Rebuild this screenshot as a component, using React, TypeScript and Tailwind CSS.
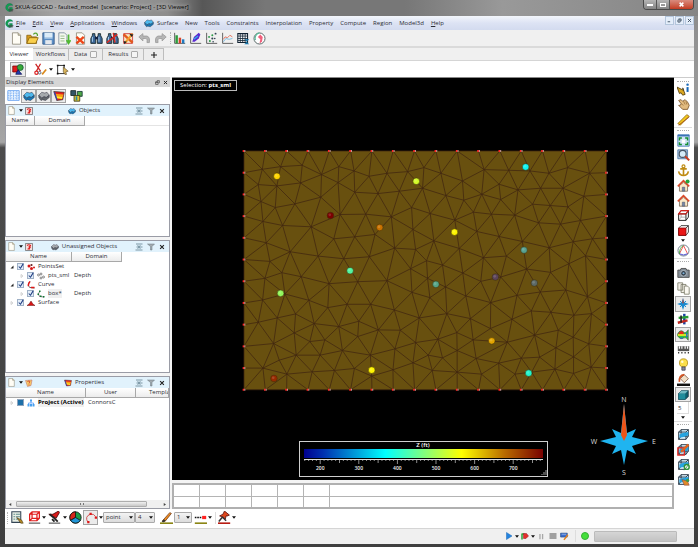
import React, { useState } from "react";
import clsx from "clsx";

type IconProps = { name: string; className?: string };

const cube = (
  <>
    <path d="M2 5l3-3h9v8l-3 4H2z" fill="#d8ecf8" stroke="#123" strokeWidth="1" />
    <path d="M2 5h9v9M11 5l3-3M5 2v8h9M5 10l-3 4" fill="none" stroke="#123" strokeWidth="1" />
    <path d="M3 8l4-2 7-1v4l-6 2-5 1z" fill="#27a4e0" />
  </>
);

const sheet = (
  <path d="M3 1h7l3 3v11H3z" fill="#fffdf5" stroke="#8d8878" strokeWidth="1" />
);

const slab = (top: string, side: string) => (
  <>
    <path d="M1 7l4-4 4 1 3-1 3 4-4 3-3-1-3 2z" fill={top} stroke="#223" strokeWidth=".6" />
    <path d="M1 7l4 4 3-2 3 1 4-3v3l-5 4-4-1-2 1-3-4z" fill={side} stroke="#223" strokeWidth=".6" />
  </>
);

const binoculars = (
  <>
    <path d="M3 2h3v2l1 2v8H1V8l2-4zM10 2h3v2l2 4v6H9V6l1-2z" fill="#3c6797" stroke="#122" />
    <path d="M6 6h4v3H6z" fill="#124" />
    <path d="M3 6v6M11 6v6" stroke="#a9cdea" strokeWidth="1.2" />
  </>
);

const axes = <path d="M2 1v13h13" fill="none" stroke="#444" strokeWidth="1" />;

const house = (
  <>
    <path d="M3 8v7h10V8L8 4z" fill="#fbe9c8" stroke="#765" />
    <path d="M1 9l7-7 7 7" fill="none" stroke="#d94a2a" strokeWidth="2" />
    <path d="M6.500 10h3v5h-3z" fill="#7686a8" stroke="#345" strokeWidth=".5" />
  </>
);

const globe = (
  <>
    <circle cx="8" cy="8" r="6.800" fill="#fff" stroke="#567" strokeWidth="1" />
    <path d="M8 2L3 12M8 2l5 10" stroke="#e33" fill="none" />
    <path d="M3 12q5 3 10 0" stroke="#33c" fill="none" />
    <path d="M8 2q-5 2-5 10" stroke="#3a3" fill="none" />
  </>
);

const icons: Record<string, React.ReactNode> = {
  logo: (
    <>
      <path d="M14 4A7 7 0 1 0 13 13V8H8v2h2q-3 3-5-1 0-5 5-5z" fill="#12a052" stroke="#064" strokeWidth=".6" />
      <path d="M6 12h9M7 14h7" stroke="#444" strokeWidth="1.400" />
    </>
  ),
  page: (
    <>
      {sheet}
      <path d="M10 1v3h3" fill="#ddd4b0" stroke="#8d8878" />
    </>
  ),
  open: (
    <>
      <path d="M1 14V4h5l1 2h6v8z" fill="#d79a1c" stroke="#8a6410" />
      <path d="M1 14l3-7h11l-3 7z" fill="#f9cf4c" stroke="#8a6410" />
      <path d="M9 3q3-3 5 0v2" fill="none" stroke="#58a332" strokeWidth="1.500" />
    </>
  ),
  save: (
    <>
      <path d="M1 1h14v14H1z" fill="#5c8ec4" stroke="#2f5686" />
      <path d="M3 1h10v6H3z" fill="#dcecf8" />
      <path d="M4 10h8v5H4z" fill="#e4e8ee" />
      <path d="M3 8h10" stroke="#a7c8e6" />
    </>
  ),
  exportDoc: (
    <>
      <path d="M1 1h7l3 3v11H1z" fill="#f4f8ee" stroke="#789" />
      <path d="M3 5h5M3 8h5M3 11h5" stroke="#8ab07a" />
      <path d="M13 3v10M10.500 10l2.500 4 2.500-4" fill="none" stroke="#51b832" strokeWidth="2" />
    </>
  ),
  remove: (
    <>
      {sheet}
      <path d="M3 6l9 8M12 6l-9 8" stroke="#ee4518" strokeWidth="3" />
    </>
  ),
  find: binoculars,
  findRed: (
    <>
      {binoculars}
      <path d="M1 13L14 3M9 1l2 12" stroke="#d42a22" strokeWidth="1.800" />
    </>
  ),
  cut: (
    <>
      <path d="M2 2h11v12H2z" fill="#f8e4c4" stroke="#c33" />
      <path d="M2 3l11 10" stroke="#e2581c" strokeWidth="3" />
      <path d="M13 2L4 13" stroke="#f0a02c" strokeWidth="2.600" />
      <path d="M9 2l5 1-2 3zM2 11l4 1-3 3z" fill="#222" />
    </>
  ),
  undo: <path d="M1 6l5-4v3h5q4 1 3 8h-3q1-5-2-5H6v3z" fill="#b5b5b5" stroke="#9a9a9a" />,
  redo: <path d="M15 6l-5-4v3H5q-4 1-3 8h3q-1-5 2-5h3v3z" fill="#b5b5b5" stroke="#9a9a9a" />,
  bars: (
    <>
      {axes}
      <path d="M3 4h3v10H3z" fill="#2d9c3c" />
      <path d="M7 7h3v7H7z" fill="#d6452b" />
      <path d="M11 9h3v5h-3z" fill="#1f7ac0" />
    </>
  ),
  cloud: (
    <>
      {axes}
      <path d="M4 12l2-6 6-5 2 2-2 5-5 4z" fill="#5a2bd0" />
      <path d="M6 9l5-4" stroke="#2fb6e8" strokeWidth="1.500" />
    </>
  ),
  scatter: (
    <>
      {axes}
      <g fill="#2a9a48">
        <circle cx="5" cy="6" r="1.200" />
        <circle cx="9" cy="4" r="1.200" />
        <circle cx="6" cy="11" r="1.200" />
      </g>
      <g fill="#345">
        <circle cx="9" cy="8" r="1.300" />
        <circle cx="13" cy="2" r="1.200" />
        <circle cx="12" cy="8" r="1" />
        <circle cx="10" cy="12" r="1" />
      </g>
    </>
  ),
  lines: (
    <>
      {axes}
      <path d="M3 9l2-3 3 1 3-3 3 2" fill="none" stroke="#e0604a" />
      <path d="M3 12l3-4 4 1 4-1" fill="none" stroke="#68b5e0" />
    </>
  ),
  sheetGrid: (
    <>
      <path d="M1 2h12v11H1z" fill="#fff" stroke="#123" strokeWidth="1.300" />
      <path d="M1 5h12M1 8h12M1 10.500h12M4 2v11M7 2v11M10 2v11" stroke="#123" />
      <path d="M9 9h6l-3 3 3 3H9l3-3z" fill="#1a76a8" />
    </>
  ),
  rose: (
    <>
      <circle cx="8" cy="8" r="6.800" fill="#fff" stroke="#566" strokeWidth="1.200" />
      <path d="M8 1a7 7 0 0 0-5 9" fill="none" stroke="#5b9" strokeWidth="1.400" />
      <path d="M9 3l3 3-1 6-3 2 1-5-3-3z" fill="#f0607c" />
    </>
  ),
  shapes: (
    <>
      <path d="M1 4h8v8H1z" fill="#e01c1c" stroke="#700" />
      <circle cx="11" cy="6" r="4" fill="#38a838" stroke="#153" />
      <path d="M5 15l3-6 5 6z" fill="#2340b0" stroke="#115" />
    </>
  ),
  scissors: (
    <>
      <path d="M2 1l6 9M8 1L3 10" stroke="#c22" strokeWidth="1.500" />
      <circle cx="3" cy="12" r="2" fill="#fff" stroke="#d22" strokeWidth="1.500" />
      <circle cx="7" cy="12" r="1.600" fill="#fff" stroke="#567" strokeWidth="1.200" />
      <path d="M10 14l5-6" stroke="#d9891c" strokeWidth="2" />
    </>
  ),
  polygon: (
    <>
      <path d="M2 3h8v4M2 3v10h9" fill="none" stroke="#222" strokeWidth="1.100" />
      <path d="M1 2h2v2H1zM9 2h2v2H9zM1 12h2v2H1z" fill="#111" />
      <path d="M9 5l6 5-3 1 1 3-2 0-2-3z" fill="#d9b45a" stroke="#542" strokeWidth=".7" />
    </>
  ),
  grid: (
    <>
      <path d="M1 2h14v12H1z" fill="#eaf4ff" stroke="#5b9bf0" />
      <path d="M1 5h14M1 8h14M1 11h14M4 2v12M8 2v12M12 2v12" stroke="#7fb2f4" strokeDasharray="2 1" />
    </>
  ),
  slabBlue: slab("#4db8ee", "#1578b8"),
  slabGray: slab("#a5a9ad", "#62676c"),
  property: (
    <>
      <path d="M1 2l14 1-2 10-8 1z" fill="#e8231c" stroke="#222" strokeWidth=".8" />
      <path d="M2 5l12 1-1 3-9-1z" fill="#fb9d15" />
      <path d="M4 8l9 1-1 3-7-1z" fill="#fdf024" />
      <path d="M1 3l2 0 3 10-1 1z" fill="#3340b0" />
    </>
  ),
  modules: (
    <>
      <path d="M1 2h6v6H1z" fill="#356" stroke="#122" />
      <path d="M9 3h6v6H9z" fill="#4fa848" stroke="#133" />
      <path d="M5 8h7v7H5z" fill="#e3c52e" stroke="#331" />
      <path d="M8 9v5" stroke="#28a" strokeWidth="2" />
    </>
  ),
  refresh: (
    <>
      <path d="M1 1h14v14H1z" fill="#f4dede" stroke="#555" strokeWidth="1.300" />
      <path d="M4 5q4-3 7 0-1 3-4 3M5 12h5M11 8l-4 4" fill="none" stroke="#d22" strokeWidth="2.400" />
    </>
  ),
  help: (
    <>
      <path d="M1 3l13-1-2 11-7 2z" fill="#f7c96a" stroke="#b66" />
      <path d="M5 6q1-3 4-2 2 2-1 4v1M8 11v2" fill="none" stroke="#c32" strokeWidth="1.500" />
    </>
  ),
  collapse: <path d="M2 2h13M5 5l3 2 3-2M3 8h12M5 11l3-2 3 2M1 14h14" fill="none" stroke="#467" strokeWidth="1.300" />,
  filter: <path d="M1 2h14l-5 5v7H7V7z" fill="#a3abb0" stroke="#66757e" />,
  close: <path d="M3 3l10 10M13 3L3 13" stroke="#222" strokeWidth="3" />,
  restore: (
    <>
      <path d="M6 2h8v8M2 6h8v8H2z" fill="none" stroke="#222" strokeWidth="1.800" />
      <path d="M2 7h8" stroke="#222" strokeWidth="2" />
    </>
  ),
  pointsSet: (
    <g fill="#d81818">
      <circle cx="4" cy="6" r="3" />
      <circle cx="9" cy="4" r="2.200" fill="#622" />
      <circle cx="9" cy="11" r="3" />
      <circle cx="14" cy="9" r="2" />
    </g>
  ),
  points: (
    <g fill="#fff" stroke="#444" strokeWidth="1.200">
      <circle cx="3" cy="6" r="2" />
      <circle cx="8" cy="4" r="2" />
      <circle cx="8" cy="12" r="2" />
      <circle cx="13" cy="10" r="2" />
    </g>
  ),
  curveRed: (
    <>
      <path d="M6 1Q-1 9 6 13l9 1" fill="none" stroke="#222" strokeWidth="1.500" />
      <path d="M6 1Q2 5 3 10M8 13h7" fill="none" stroke="#e01818" strokeWidth="3" />
    </>
  ),
  curve: (
    <>
      <path d="M6 2Q0 8 5 13l9 1" fill="none" stroke="#555" strokeWidth="1.500" />
      <path d="M4 1h3v3H4zM1 7h3v3H1zM6 11h3v3H6zM12 12h3v3h-3z" fill="#173" />
    </>
  ),
  surface: <path d="M0 13q4-1 8-9 4 8 8 9z" fill="#d81414" stroke="#611" />,
  tree: (
    <>
      <path d="M8 4v4M3 12V8h10v4" fill="none" stroke="#38f" strokeWidth="1.300" />
      <path d="M6 1h4v4H6zM1 10h4v5H1zM6 10h4v5H6zM11 10h4v5h-4z" fill="#48a0ee" />
    </>
  ),
  listPen: (
    <>
      <path d="M1 1h11v13H1z" fill="#e9efe6" stroke="#345" strokeWidth="1.300" />
      <path d="M3 4h2M6 4h5M3 7h2M6 7h5M3 10h2M6 10h3" stroke="#477" />
      <path d="M7 8l6 3 2 4-3 0z" fill="#b58a25" stroke="#431" strokeWidth=".7" />
    </>
  ),
  wireRed: (
    <>
      <path d="M2 4l3-3h9v8l-3 3H2zM2 4h9v8M11 4l3-3M5 1v8h9M5 9l-3 3" fill="none" stroke="#e01c1c" strokeWidth="1.500" />
      <path d="M1 14h14v2H1z" fill="#888" />
    </>
  ),
  lamp: (
    <>
      <path d="M1 4l5 0 7-4 1 2-4 7-3-2z" fill="#d91c1c" stroke="#400" />
      <path d="M2 4l6 5 4 4M5 10l3 3" fill="none" stroke="#222" strokeWidth="2.200" />
      <path d="M1 14h14v2H1z" fill="#888" />
    </>
  ),
  pie: (
    <>
      <circle cx="8" cy="8" r="7" fill="#1d9c48" stroke="#111" />
      <path d="M8 8V1a7 7 0 0 0-6 10.500z" fill="#d8261c" stroke="#111" />
      <path d="M8 8l-6 3.500a7 7 0 0 0 12 0z" fill="#2196d8" stroke="#111" />
    </>
  ),
  arc: (
    <>
      <path d="M4 14Q-1 6 7 3q5-1 7 3" fill="none" stroke="#c44" strokeWidth="1.200" />
      <path d="M6 1h3v3H6zM3 12h3v3H3zM13 6h3v3h-3z" fill="#e01818" />
    </>
  ),
  brush: (
    <>
      <path d="M3 12l9-10 2 1-8 10z" fill="#ed8a1c" stroke="#742" />
      <path d="M2 13l3-3 2 2-3 2z" fill="#333" />
      <path d="M0 14h16v2H0z" fill="#8b8515" />
    </>
  ),
  lineStyle: (
    <>
      <path d="M1 8h9" stroke="#111" strokeWidth="2" strokeDasharray="2 1" />
      <path d="M10 6h5v4h-5z" fill="#f22" />
      <path d="M1 14h15v2H1z" fill="#8b8515" />
    </>
  ),
  pin: (
    <>
      <path d="M8 0l6 5-2 1-2 0-1 4-2-2-5-2 4-2z" fill="#de471d" stroke="#511" />
      <path d="M5 8l-4 5M5 7l5 5" stroke="#333" strokeWidth="1.800" />
      <path d="M0 14h15v2H0z" fill="#b81c12" />
    </>
  ),
  pickInfo: (
    <>
      <path d="M0 5l8 4-1-3 3 8-3 1-2-3-2 1z" fill="#dba823" stroke="#4a3508" />
      <path d="M13 5v6" stroke="#1767b8" strokeWidth="2.500" />
      <circle cx="13" cy="2" r="1.500" fill="#1767b8" />
    </>
  ),
  hand: (
    <>
      <path d="M2 3l3-1 2 2 3-2 3 3 2 4-2 5H7L2 9l2 0 1-2z" fill="#e2bb80" stroke="#765028" />
      <path d="M5 7l3 2M8 4l2 4M11 4l1 4" stroke="#8e6433" strokeWidth=".8" />
    </>
  ),
  ruler: (
    <>
      <path d="M1 13L12 2l3 2L4 15z" fill="#f1c61c" stroke="#94690b" />
      <path d="M2 15L15 5" stroke="#a04818" />
    </>
  ),
  fit: (
    <>
      <path d="M1 1h14v14H1z" fill="#cfe2f5" stroke="#3973b5" />
      <path d="M1 1h14v2H1z" fill="#3973b5" />
      <path d="M3 8V5h3M10 5h3v3M3 10v3h3M13 10v3h-3" fill="none" stroke="#139030" strokeWidth="1.800" />
      <path d="M6 7h4v4H6z" fill="#fff" />
    </>
  ),
  zoom: (
    <>
      <path d="M1 1h12v11H1z" fill="#a9bfd8" stroke="#4875a7" />
      <circle cx="7" cy="6" r="4.300" fill="#d5ebf8" stroke="#456" strokeWidth="1.400" />
      <path d="M10 9l5 5" stroke="#c63c22" strokeWidth="2.600" />
    </>
  ),
  anchor: (
    <>
      <path d="M8 4v10M4 6h8M2 9q1 5 6 5t6-5" fill="none" stroke="#bf8b13" strokeWidth="2" />
      <circle cx="8" cy="3" r="1.800" fill="none" stroke="#bf8b13" strokeWidth="1.500" />
    </>
  ),
  homeGreen: (
    <>
      {house}
      <circle cx="13" cy="3" r="2.500" fill="#24a33c" />
    </>
  ),
  home: house,
  boxTop: (
    <>
      <path d="M2 6l3-4h9v8l-3 4H2zM2 6h9v8M11 6l3-4" fill="#fff" stroke="#222" strokeWidth="1.200" />
      <path d="M5 6v4h6M5 10l-3 4" fill="none" stroke="#777" strokeWidth=".7" />
      <path d="M2 6l3-4h9l-3 4z" fill="none" stroke="#d3201b" strokeWidth="1.300" />
    </>
  ),
  boxFront: (
    <>
      <path d="M2 5l3-3h9v8l-3 4H2zM11 5l3-3" fill="#fff" stroke="#222" />
      <path d="M2 5h9v9H2z" fill="#ea1717" stroke="#800" />
    </>
  ),
  globe,
  camera: (
    <>
      <path d="M1 5h3l1-2h6l1 2h3v9H1z" fill="#848d96" stroke="#444" />
      <circle cx="8" cy="9" r="3.500" fill="#333e4a" stroke="#c7d0d8" />
      <circle cx="8" cy="9" r="1.300" fill="#7eb3da" />
    </>
  ),
  copy: (
    <>
      <path d="M1 1h6v9H1zM5 3h6v10H5z" fill="#f4f1e8" stroke="#776" />
      <path d="M9 5h4l2 2v8H9z" fill="#fbf9f2" stroke="#776" />
    </>
  ),
  star: (
    <>
      <path d="M8 0l2 6 6 2-6 2-2 6-2-6-6-2 6-2z" fill="#1c8ad0" />
      <path d="M4 4l8 8M12 4l-8 8" stroke="#1c8ad0" strokeWidth="1.300" />
      <path d="M8 0l1 7H7z" fill="#d53c1c" />
    </>
  ),
  axes3d: (
    <>
      <path d="M9 1v13" stroke="#1a40a0" strokeWidth="3" />
      <path d="M2 6l12-1" stroke="#2b9c35" strokeWidth="3" />
      <path d="M1 12l12-3" stroke="#c02820" strokeWidth="3" />
      <path d="M5 3v9" stroke="#222" strokeWidth="2" />
    </>
  ),
  colors: (
    <>
      <path d="M0 8q4-9 9-4 2 3 6-3v14q-3-5-6-3-5 3-9-4z" fill="#2fc43a" stroke="#333" strokeWidth=".7" />
      <path d="M2 6q4-6 7-1v2H2z" fill="#e9261b" />
      <path d="M1 8h13" stroke="#f4e824" strokeWidth="2.200" />
      <path d="M4 12h4M13 5v6" stroke="#2362e0" strokeWidth="1.600" />
    </>
  ),
  scaleBar: (
    <>
      <path d="M1 4h14v6H1z" fill="#555" />
      <path d="M3 4v3M6 4v3M10 4v3M13 4v3" stroke="#fff" strokeWidth="1.500" />
      <path d="M2 11v2M6 11v2M10 11v2M14 11v2" stroke="#333" strokeWidth="1.500" />
    </>
  ),
  bulb: (
    <>
      <circle cx="8" cy="6" r="5" fill="#fbdf4b" stroke="#b08d18" />
      <path d="M6 11h4v4H6z" fill="#889" stroke="#445" />
      <circle cx="6.500" cy="4.500" r="1.500" fill="#fffbd8" />
    </>
  ),
  paint: (
    <>
      <path d="M4 7l5-5 5 5-5 5z" fill="#f0e0c8" stroke="#754" />
      <path d="M9 2Q2 3 3 11" fill="none" stroke="#d05222" strokeWidth="2" />
      <path d="M0 13h16v3H0z" fill="#111" />
    </>
  ),
  solid: (
    <>
      <path d="M2 6l4-4h9v8l-4 4H2z" fill="#0d5d6e" stroke="#123" />
      <path d="M2 6h9v8H2z" fill="#218c9c" />
      <path d="M2 6l4-4h9l-4 4z" fill="#73bac4" />
    </>
  ),
  cube,
  cubePen: (
    <>
      {cube}
      <path d="M1 6h8v9H1z" fill="none" stroke="#e32720" strokeWidth="1.600" />
      <path d="M5 11l9-9" stroke="#e2641f" strokeWidth="3" />
    </>
  ),
  cubeSync: (
    <>
      {cube}
      <circle cx="12" cy="11" r="3" fill="#fff" stroke="#31903c" strokeWidth="1.800" />
      <path d="M9 15l6-8" stroke="#31903c" />
    </>
  ),
  cubeHand: (
    <>
      {cube}
      <path d="M6 8l7 2 2 5H9z" fill="#e08a28" stroke="#844" strokeWidth=".7" />
      <circle cx="13" cy="9" r="2" fill="#3c9c46" />
    </>
  ),
  play: <path d="M3 1l11 7-11 7z" fill="#2484e0" stroke="#1667b5" />,
  record: (
    <>
      <path d="M2 3v12M2 4h5" stroke="#2aa436" strokeWidth="3" />
      <path d="M5 3l6 0 4 5-5 5H5z" fill="#e3302a" stroke="#912" />
    </>
  ),
  pause: <path d="M3 2h3v12H3zM9 2h3v12H9z" fill="#a8a8a8" />,
  stop: <path d="M1 2h14v12H1z" fill="#a0a0a0" />,
  edit: (
    <>
      <path d="M1 2h12v7H1z" fill="#3b6ed0" stroke="#247" />
      <path d="M3 4h8" stroke="#cde" />
      <path d="M7 14l7-9" stroke="#e2821f" strokeWidth="2.600" />
    </>
  ),
};

const Icon: React.FC<IconProps> = ({ name, className }) => (
  <svg viewBox="0 0 16 16" aria-hidden="true" className={clsx("shrink-0", className ?? "size-3")}>
    {icons[name]}
  </svg>
);

const Caret: React.FC<{ className?: string }> = ({ className }) => (
  <svg viewBox="0 0 8 5" aria-hidden="true" className={clsx("h-[3px] w-1 shrink-0", className)}>
    <path d="M0 0h8L4 5z" fill="#111" />
  </svg>
);

interface ToolButtonProps {
  icon: string;
  label: string;
  pressed?: boolean;
  className?: string;
}

const ToolButton: React.FC<ToolButtonProps> = ({ icon, label, pressed, className }) => (
  <button
    type="button"
    aria-label={label}
    aria-pressed={pressed}
    className={clsx(
      "flex shrink-0 items-center justify-center",
      pressed && "border border-[#a3a3a3] bg-[#ebebeb]",
      className ?? "size-4",
    )}
  >
    <Icon name={icon} className={pressed ? "size-3" : "size-[13px]"} />
  </button>
);

const MenuCaret: React.FC<{ label: string; className?: string }> = ({ label, className }) => (
  <button type="button" aria-label={label} className={clsx("flex items-center justify-center", className ?? "h-4 w-2")}>
    <Caret />
  </button>
);

const TitleBar = () => (
  <header className="flex h-4 shrink-0 items-start justify-between">
    <div className="flex h-[15px] items-center gap-px">
      <Icon name="logo" className="size-[9px]" />
      <h1 className="text-[6px] whitespace-pre text-black [text-shadow:0_0_4px_#eee]">
        SKUA-GOCAD - faulted_model  [scenario: Project] - [3D Viewer]
      </h1>
    </div>
    <div className="flex h-[10px] overflow-hidden rounded-b border border-t-0 border-[#4a4a4a]">
      <button type="button" aria-label="Minimize" className="flex w-[13px] items-center justify-center border-r border-[#555] bg-gradient-to-b from-[#b5b5b5] to-[#858585]">
        <span className="h-0.5 w-1.5 bg-white" />
      </button>
      <button type="button" aria-label="Maximize" className="flex w-[13px] items-center justify-center border-r border-[#555] bg-gradient-to-b from-[#b5b5b5] to-[#858585]">
        <span className="h-1 w-1.5 border border-white" />
      </button>
      <button type="button" aria-label="Close" className="flex w-[23px] items-center justify-center bg-gradient-to-b from-[#d98b7d] to-[#c23a20]">
        <svg viewBox="0 0 8 8" className="size-[5px]">
          <path d="M1 1l6 6M7 1L1 7" stroke="#fff" strokeWidth="2.400" />
        </svg>
      </button>
    </div>
  </header>
);

const menus = ["Surface", "New", "Tools", "Constraints", "Interpolation", "Property", "Compute", "Region", "Model3d"];

const accel = (text: string) => (
  <>
    <span className="underline">{text[0]}</span>
    {text.slice(1)}
  </>
);

const MenuBar = () => (
  <nav className="flex h-[14px] shrink-0 items-start justify-between bg-gradient-to-b from-[#f3f6fb] via-[#dde3f4] to-[#d3dbef]">
    <div className="flex h-[14px] items-center">
      <Icon name="logo" className="size-[9px]" />
      <div className="flex items-center gap-[7px] pl-0.5">
        {["File", "Edit", "View", "Applications", "Windows"].map((m) => (
          <button key={m} type="button">
            {accel(m)}
          </button>
        ))}
        {menus.map((m, i) => (
          <button key={m} type="button" className="flex items-center gap-[3px]">
            {i === 0 && <Icon name="slabBlue" className="size-[10px]" />}
            {m}
          </button>
        ))}
        <button type="button">{accel("Help")}</button>
      </div>
    </div>
    <div className="flex gap-px">
      {[
        { name: "Minimize view", path: "M2 12h8" },
        { name: "Restore view", path: "M5 3h8v7M3 6h7v7H3z" },
        { name: "Close view", path: "M3 3l10 10M13 3L3 13" },
      ].map((b) => (
        <button key={b.name} type="button" aria-label={b.name} className="flex size-[9px] items-center justify-center border border-[#b4c6dc] bg-[#e4eefa]">
          <svg viewBox="0 0 16 16" className="size-[5px]">
            <path d={b.path} fill="none" stroke="#456" strokeWidth="3" />
          </svg>
        </button>
      ))}
    </div>
  </nav>
);

const fileTools = [
  ["page", "New"],
  ["open", "Open"],
  ["save", "Save"],
  ["exportDoc", "Export"],
  ["remove", "Delete"],
  ["find", "Find"],
  ["findRed", "Find object"],
  ["cut", "Clear"],
  ["undo", "Undo"],
  ["redo", "Redo"],
];

const chartTools = [
  ["bars", "Histogram"],
  ["cloud", "Cross plot"],
  ["scatter", "Scatter plot"],
  ["lines", "Line plot"],
  ["sheetGrid", "Spreadsheet"],
  ["rose", "Rose diagram"],
];

const MainToolbar = () => (
  <div className="flex h-[18px] shrink-0 items-center border-b-2 border-[#dadada] bg-[#f0f0f0]">
    <div className="flex items-center pl-[3px]">
      {fileTools.map(([icon, label]) => (
        <ToolButton key={icon} icon={icon} label={label} />
      ))}
    </div>
    <span className="ml-0.5 h-3 border-l border-dotted border-[#b5b5b5]" />
    <div className="flex items-center">
      {chartTools.map(([icon, label]) => (
        <ToolButton key={icon} icon={icon} label={label} />
      ))}
    </div>
  </div>
);

const TabBar = () => {
  const tab = "flex h-3 items-center border border-l-0 border-b-0 border-[#bdbdbd] bg-[#ececec]";
  return (
    <div role="tablist" className="flex h-3 shrink-0 items-end bg-[#f0f0f0]">
      <button role="tab" aria-selected="true" type="button" className="h-3 w-7 bg-white">
        Viewer
      </button>
      <button role="tab" type="button" className={clsx(tab, "w-9 justify-center")}>
        Workflows
      </button>
      {["Data", "Results"].map((t) => (
        <button key={t} role="tab" type="button" className={clsx(tab, "gap-[3px] px-[5px]")}>
          {t}
          <span className="size-[7px] rounded-[1px] border border-[#aaa] bg-[#f5f5f5]" />
        </button>
      ))}
      <button type="button" aria-label="Add tab" className={clsx(tab, "w-5 justify-center")}>
        <svg viewBox="0 0 8 8" className="size-[6px]">
          <path d="M4 0v8M0 4h8" stroke="#222" strokeWidth="1.500" />
        </svg>
      </button>
    </div>
  );
};

const ViewerToolbar = () => (
  <div className="flex h-[17px] shrink-0 items-center border-t border-[#d5d5d5] bg-white pl-[5px]">
    <ToolButton icon="shapes" label="Display shapes" pressed className="mr-1.5 h-[15px] w-4" />
    <ToolButton icon="scissors" label="Cut" />
    <MenuCaret label="Cut options" className="h-4 w-1.5" />
    <ToolButton icon="polygon" label="Polygon selection" />
    <MenuCaret label="Selection options" className="h-4 w-1.5" />
  </div>
);

interface PanelProps {
  title: string;
  icon: string;
  action: string;
  children: React.ReactNode;
}

const Panel: React.FC<PanelProps> = ({ title, icon, action, children }) => (
  <section className="flex min-h-0 flex-1 flex-col border border-[#9a9ca6] bg-white">
    <div className="flex h-[11px] shrink-0 items-center bg-[#e1f2fc] px-px">
      <button type="button" aria-label={`New in ${title}`} className="flex items-center gap-[3px]">
        <Icon name="page" className="size-[9px]" />
        <Caret />
      </button>
      <button type="button" aria-label={`Refresh ${title}`} className="ml-0.5">
        <Icon name={action} className="size-2" />
      </button>
      <h2 className="flex flex-1 items-center justify-center gap-[3px]">
        <Icon name={icon} className="size-2" />
        {title}
      </h2>
      <div className="flex items-center gap-1 pr-[3px]">
        <button type="button" aria-label="Collapse all">
          <Icon name="collapse" className="size-2" />
        </button>
        <button type="button" aria-label="Filter">
          <Icon name="filter" className="size-2" />
        </button>
        <button type="button" aria-label={`Close ${title}`}>
          <Icon name="close" className="size-[6px]" />
        </button>
      </div>
    </div>
    {children}
  </section>
);

const th = "h-[9px] border border-t-0 border-l-0 border-[#a8a8a8] bg-gradient-to-b from-white to-[#ececec] p-0 text-center font-normal";

const Twisty: React.FC<{ open?: boolean }> = ({ open }) => (
  <svg viewBox="0 0 8 8" aria-hidden="true" className="size-1 shrink-0">
    {open ? <path d="M7 1v6H1z" fill="#222" /> : <path d="M2 1l4 3-4 3z" fill="#fff" stroke="#aaa" />}
  </svg>
);

const objectRows = [
  { name: "PointsSet", icon: "pointsSet", domain: "", level: 0, open: true },
  { name: "pts_sml", icon: "points", domain: "Depth", level: 1, open: false },
  { name: "Curve", icon: "curveRed", domain: "", level: 0, open: true },
  { name: "box*", icon: "curve", domain: "Depth", level: 1, open: false },
  { name: "Surface", icon: "surface", domain: "", level: 0, open: false },
];

const UnassignedTable = () => {
  const [hidden, setHidden] = useState<string[]>([]);
  const toggle = (name: string) =>
    setHidden((h) => (h.includes(name) ? h.filter((n) => n !== name) : [...h, name]));

  return (
    <table className="w-full table-fixed border-separate border-spacing-0">
      <thead>
        <tr>
          <th className={clsx(th, "w-[66px]")}>Name</th>
          <th className={clsx(th, "w-[50px]")}>Domain</th>
          <td />
        </tr>
      </thead>
      <tbody>
        {objectRows.map((row) => (
          <tr key={row.name}>
            <td className="h-[9px] p-0">
              <label className={clsx("flex items-center gap-[3px] pl-1 whitespace-nowrap", row.level === 1 && "ml-[10px]")}>
                <Twisty open={row.open} />
                <span className="relative flex size-[7px]">
                  <input
                    type="checkbox"
                    checked={!hidden.includes(row.name)}
                    onChange={() => toggle(row.name)}
                    className="peer size-[7px] appearance-none border border-[#9eb0c6] bg-[#e3edf8]"
                  />
                  <svg viewBox="0 0 8 8" className="pointer-events-none absolute inset-0 hidden size-[7px] peer-checked:block">
                    <path d="M2 4l2 2 3-5" fill="none" stroke="#1f3c82" strokeWidth="1.200" />
                  </svg>
                </span>
                <Icon name={row.icon} className="size-2" />
                <span className={clsx(row.name === "box*" && "bg-[#f0f0f0]")}>{row.name}</span>
              </label>
            </td>
            <td className="p-0 pl-0.5">{row.domain}</td>
            <td />
          </tr>
        ))}
      </tbody>
    </table>
  );
};

const displayModes = [
  { icon: "slabBlue", label: "Objects" },
  { icon: "slabGray", label: "Unassigned objects" },
  { icon: "property", label: "Properties" },
];

const SideDock = () => (
  <aside className="flex w-[165px] shrink-0 flex-col">
    <div className="flex h-[10px] shrink-0 items-center justify-between bg-[#d6d6d6] pr-0.5 pl-px">
      <h2>Display Elements</h2>
      <div className="flex items-center gap-[3px]">
        <button type="button" aria-label="Float">
          <Icon name="restore" className="size-[5px]" />
        </button>
        <button type="button" aria-label="Close display elements">
          <Icon name="close" className="size-[5px]" />
        </button>
      </div>
    </div>
    <div className="flex h-[17px] shrink-0 items-center bg-white">
      <ToolButton icon="grid" label="Grid" />
      {displayModes.map((m) => (
        <ToolButton key={m.icon} icon={m.icon} label={m.label} pressed className="h-[14px] w-[15px]" />
      ))}
      <ToolButton icon="modules" label="Modules" className="ml-0.5 size-4" />
    </div>
    <div className="flex min-h-0 flex-1 flex-col gap-[3px]">
      <Panel title="Objects" icon="slabBlue" action="refresh">
        <table className="w-full table-fixed border-separate border-spacing-0">
          <thead>
            <tr>
              <th className={clsx(th, "w-[29px]")}>Name</th>
              <th className={clsx(th, "w-[50px]")}>Domain</th>
              <td className="border-b border-[#e4e4e4]" />
            </tr>
          </thead>
        </table>
      </Panel>
      <Panel title="Unassigned Objects" icon="slabGray" action="refresh">
        <UnassignedTable />
      </Panel>
      <Panel title="Properties" icon="property" action="help">
        <table className="w-full table-fixed border-separate border-spacing-0">
          <thead>
            <tr>
              <th className={clsx(th, "w-20")}>Name</th>
              <th className={clsx(th, "w-[50px]")}>User</th>
              <th className={clsx(th, "overflow-hidden text-clip")}>
                <span className="pl-[13px] whitespace-nowrap">Template</span>
              </th>
            </tr>
          </thead>
          <tbody>
            <tr>
              <td className="h-[9px] p-0">
                <div className="flex items-center gap-[3px] pl-1 whitespace-nowrap">
                  <Twisty />
                  <span className="size-[7px] border border-[#8ea4bd] bg-[#1d6fa8]" />
                  <Icon name="tree" className="size-2" />
                  <strong className="bg-[#f0f0f0] text-black">Project (Active)</strong>
                </div>
              </td>
              <td className="p-0 pl-0.5">ConnorsC</td>
              <td />
            </tr>
          </tbody>
        </table>
        <div className="mt-auto flex h-2 items-center justify-between bg-[#f0f0f0] px-[3px]">
          <svg viewBox="0 0 4 4" className="size-[3px]">
            <path d="M3 0v4L0 2z" fill="#444" />
          </svg>
          <div className="mr-4 ml-1 flex h-1.5 flex-1 items-center justify-center rounded-[1px] border border-[#adadad] bg-gradient-to-b from-[#f0f0f0] to-[#c8c8c8]">
            <span className="h-[2px] w-1 border-x border-[#777]" />
          </div>
          <svg viewBox="0 0 4 4" className="size-[3px]">
            <path d="M1 0v4l3-2z" fill="#444" />
          </svg>
        </div>
      </Panel>
    </div>
  </aside>
);

// Mesh coordinates, three units to one screen pixel
const MESH_W = 1090;
const MESH_H = 718;

type Point = [number, number];

const innerNodes: Point[] = [
  [55, 55], [110, 47], [175, 43], [233, 71], [285, 47], [331, 60], [376, 76], [430, 67], [492, 62],
  [43, 101], [99, 105], [170, 96], [283, 95], [333, 124], [403, 128], [467, 121], [537, 112],
  [51, 152], [153, 159], [94, 170], [231, 139], [289, 191], [366, 190], [443, 198], [504, 170],
  [57, 212], [116, 224], [202, 228], [270, 264], [333, 258], [394, 251], [508, 236],
  [67, 276], [139, 303], [223, 316], [300, 324], [377, 318], [453, 292], [516, 296],
  [78, 332], [114, 366], [172, 378], [256, 399], [342, 393], [430, 390], [501, 354],
  [63, 383], [56, 448], [123, 430], [195, 449], [252, 471], [310, 461], [381, 461], [505, 425],
  [155, 490], [100, 502], [43, 515], [211, 519], [285, 528], [345, 512], [452, 478], [527, 502],
  [151, 547], [89, 579], [198, 573], [243, 568], [342, 558], [404, 538], [470, 539], [516, 576],
  [157, 614], [106, 629], [229, 614], [296, 600], [380, 614], [454, 595], [508, 637],
  [57, 653], [129, 671], [205, 664], [272, 660], [332, 654], [384, 677], [448, 658],
  [541, 50], [592, 67], [657, 90], [722, 56], [796, 58], [860, 60], [917, 67], [973, 50], [1039, 67],
  [607, 134], [661, 148], [715, 130], [767, 100], [772, 146], [824, 117], [892, 112], [959, 112], [1022, 136],
  [560, 188], [634, 208], [690, 184], [744, 190], [814, 193], [868, 160], [921, 164], [974, 168], [1012, 209],
  [886, 216], [952, 220], [571, 270], [647, 293], [700, 242], [767, 257], [837, 272], [918, 291], [990, 273], [1048, 264],
  [549, 330], [597, 343], [720, 321], [789, 316], [850, 355], [977, 339], [1027, 315], [922, 365],
  [552, 383], [606, 409], [658, 367], [712, 392], [772, 379], [559, 441], [667, 436], [742, 456], [821, 434], [891, 424], [968, 418], [1033, 438],
  [610, 489], [681, 504], [806, 506], [864, 481], [923, 485], [992, 494], [1045, 489],
  [583, 566], [640, 546], [689, 568], [741, 534], [792, 575], [874, 554], [945, 539], [990, 560], [1037, 580],
  [554, 614], [597, 622], [641, 600], [698, 624], [766, 638], [834, 623], [889, 620], [938, 592], [991, 619], [1044, 650],
  [566, 660], [641, 665], [714, 671], [815, 671], [865, 665], [935, 656], [991, 669],
];

const borderNodes: Point[] = [];
for (let i = 0; i <= 17; i++) {
  const x = (i * MESH_W) / 17;
  borderNodes.push([x, 0], [x, MESH_H]);
}
for (let i = 1; i < 11; i++) {
  const y = (i * MESH_H) / 11;
  borderNodes.push([0, y], [MESH_W, y]);
}

// Bowyer-Watson triangulation, returns the unique edges as one path
const triangulate = (nodes: Point[]): string => {
  const n = nodes.length;
  const pts: Point[] = [...nodes, [-20000, -20000], [22000, -20000], [500, 30000]];
  let tris: number[][] = [[n, n + 1, n + 2]];

  const inCircle = ([a, b, c]: number[], p: Point) => {
    const [ax, ay] = pts[a];
    const [bx, by] = pts[b];
    const [cx, cy] = pts[c];
    const d = 2 * (ax * (by - cy) + bx * (cy - ay) + cx * (ay - by));
    if (d === 0) return true;
    const a2 = ax * ax + ay * ay;
    const b2 = bx * bx + by * by;
    const c2 = cx * cx + cy * cy;
    const ux = (a2 * (by - cy) + b2 * (cy - ay) + c2 * (ay - by)) / d;
    const uy = (a2 * (cx - bx) + b2 * (ax - cx) + c2 * (bx - ax)) / d;
    return Math.hypot(p[0] - ux, p[1] - uy) < Math.hypot(ax - ux, ay - uy);
  };

  const key = (a: number, b: number) => (a < b ? `${a}-${b}` : `${b}-${a}`);

  for (let i = 0; i < n; i++) {
    const bad = tris.filter((t) => inCircle(t, pts[i]));
    const count = new Map<string, number>();
    bad.forEach(([a, b, c]) =>
      [key(a, b), key(b, c), key(c, a)].forEach((k) => count.set(k, (count.get(k) ?? 0) + 1)),
    );
    tris = tris.filter((t) => !bad.includes(t));
    count.forEach((c, k) => {
      if (c === 1) {
        const [a, b] = k.split("-").map(Number);
        tris.push([a, b, i]);
      }
    });
  }

  const edges = new Set<string>();
  tris
    .filter((t) => t.every((v) => v < n))
    .forEach(([a, b, c]) => [key(a, b), key(b, c), key(c, a)].forEach((k) => edges.add(k)));

  return [...edges]
    .map((k) => {
      const [a, b] = k.split("-").map(Number);
      return `M${pts[a].join(" ")}L${pts[b].join(" ")}`;
    })
    .join("");
};

const meshPath = triangulate([...innerNodes, ...borderNodes]);

const samples = [
  { x: 99, y: 76, color: "#ffd400" },
  { x: 518, y: 91, color: "#d4fa28" },
  { x: 260, y: 194, color: "#7c0000" },
  { x: 408, y: 230, color: "#c97200" },
  { x: 319, y: 360, color: "#52f5a0" },
  { x: 110, y: 428, color: "#92f85c" },
  { x: 90, y: 684, color: "#982a00" },
  { x: 384, y: 659, color: "#fff500" },
  { x: 847, y: 48, color: "#10f4f0" },
  { x: 633, y: 244, color: "#fff500" },
  { x: 842, y: 298, color: "#56a090" },
  { x: 756, y: 379, color: "#5b4358" },
  { x: 873, y: 397, color: "#5c6966" },
  { x: 577, y: 401, color: "#56a588" },
  { x: 745, y: 571, color: "#e2a400" },
  { x: 856, y: 668, color: "#22f6cc" },
];

const MeshView = () => (
  <svg viewBox="-6 -6 1102 730" aria-label="Faulted surface mesh" className="absolute top-[71px] left-[14%] w-[73%]">
    <rect width={MESH_W} height={MESH_H} fill="#68500f" />
    <path d={meshPath} fill="none" stroke="#412610" strokeWidth="2.300" />
    {borderNodes.map(([x, y]) => (
      <g key={`${x}-${y}`}>
        <rect x={x - 4} y={y - 3} width="5" height="6" fill="#ff2424" />
        <rect x={x + 1} y={y - 3} width="3" height="6" fill="#c9a0a0" />
      </g>
    ))}
    {samples.map((s) => (
      <g key={`${s.x}-${s.y}`}>
        <circle cx={s.x} cy={s.y} r="10" fill={s.color} stroke="#3a2c08" strokeWidth="1.500" />
        <circle cx={s.x - 2} cy={s.y - 2} r="4" fill="#fff" opacity=".15" />
      </g>
    ))}
  </svg>
);

const scaleX = (value: number) => 4 + (value - 158) * 0.386;

const ColorLegend = () => (
  <div className="absolute bottom-[3px] left-1/4 ml-px w-[249px] border border-[#cfcfcf] bg-black text-white">
    <div className="text-center text-[6px] leading-[7px] font-semibold">Z (ft)</div>
    <div className="mx-1 h-[9px] bg-[linear-gradient(90deg,#00008f,#0030b0_8%,#00ffff_34%,#ffff00_66%,#b86a00_84%,#780000)]" />
    <svg viewBox="0 0 247 18" className="block w-full" aria-label="Depth scale">
      <path d="M4 1.500h239" stroke="#ddd" />
      {Array.from({ length: 62 }, (_, i) => 160 + i * 10).map((v) => (
        <path
          key={v}
          d={`M${scaleX(v)} 2v${v % 100 === 0 ? 4 : v % 50 === 0 ? 3 : 1}`}
          stroke="#ccc"
          strokeWidth=".7"
        />
      ))}
      {[200, 300, 400, 500, 600, 700].map((v) => (
        <text key={v} x={scaleX(v)} y="12" textAnchor="middle" fontSize="5" fontWeight="600" fill="#eee">
          {v}
        </text>
      ))}
      <path d="M242 17v-1M244 17v-3M246 17v-5" stroke="#ccc" strokeWidth=".8" />
    </svg>
  </div>
);

const Compass = () => (
  <svg viewBox="0 0 70 84" aria-label="Compass" className="absolute right-[15px] bottom-0.5 w-[70px] text-[7px]">
    <path
      d="M35 71L32 56 23 60 27 52 11 47 27 43 23 35 32 39 35 10 38 39 47 35 43 43 59 47 43 52 47 60 38 56z"
      fill="#1fb4f0"
    />
    <path d="M35 10l3 31-3 6-3-6z" fill="#ee5418" />
    <g fill="#ddd" textAnchor="middle">
      <text x="35" y="8">N</text>
      <text x="35" y="81">S</text>
      <text x="5" y="50">W</text>
      <text x="65" y="50">E</text>
    </g>
  </svg>
);

const Viewer = () => (
  <main className="flex min-w-0 flex-1 flex-col gap-[3px]">
    <div className="relative min-h-0 flex-1 overflow-hidden border-t border-[#888] bg-black pt-0.5 pl-0.5">
      <p className="inline-block border border-[#bbb] px-[5px] text-[6px] leading-[9px] text-white">
        Selection: <strong>pts_sml</strong>
      </p>
      <MeshView />
      <ColorLegend />
      <Compass />
    </div>
    <table className="w-full table-fixed border-collapse border-2 border-[#b0b0b0] bg-white" aria-label="Values">
      <tbody>
        {[0, 1].map((r) => (
          <tr key={r}>
            {[0, 1, 2, 3, 4, 5].map((c) => (
              <td key={c} className="h-3 w-[26px] border border-[#b4b4b4] p-0" />
            ))}
            <td className="border border-[#b4b4b4] p-0" />
          </tr>
        ))}
      </tbody>
    </table>
  </main>
);

const RailGrip = () => (
  <div className="flex h-[6px] w-full items-center justify-center border-t border-[#ddd]">
    <span className="w-3 border-t border-dotted border-[#aaa]" />
  </div>
);

const Rail: React.FC<{ items: [string, string, boolean?][] }> = ({ items }) => (
  <>
    {items.map(([icon, label, pressed]) => (
      <ToolButton key={icon} icon={icon} label={label} pressed={pressed} className="h-[15px] w-4" />
    ))}
  </>
);

const RightRail = () => (
  <div className="flex w-5 shrink-0 flex-col items-center border-t border-[#ccc] bg-white pr-0.5">
    <div className="h-1 w-3 border-b border-dotted border-[#aaa]" />
    <Rail items={[["pickInfo", "Pick"], ["hand", "Pan"], ["ruler", "Measure"]]} />
    <RailGrip />
    <Rail
      items={[
        ["fit", "Fit view"],
        ["zoom", "Zoom"],
        ["anchor", "Anchor"],
        ["homeGreen", "Save home view"],
        ["home", "Home view"],
        ["boxTop", "Top view"],
        ["boxFront", "Front view"],
      ]}
    />
    <MenuCaret label="More views" className="h-[5px] w-4" />
    <Rail items={[["globe", "Rotate"]]} />
    <RailGrip />
    <ToolButton icon="camera" label="Snapshot" />
    <ToolButton icon="copy" label="Copy view" />
    <ToolButton icon="star" label="Compass" pressed />
    <Rail
      items={[
        ["axes3d", "Axes"],
        ["colors", "Color scale", true],
        ["scaleBar", "Scale bar"],
        ["bulb", "Light"],
        ["paint", "Background"],
        ["solid", "Perspective", true],
      ]}
    />
    <input aria-label="Vertical exaggeration" defaultValue="5" className="h-3 w-3 border-r border-b border-[#ddd] bg-white pl-px outline-none" />
    <MenuCaret label="Exaggeration presets" className="h-[7px] w-4" />
    <RailGrip />
    <Rail
      items={[
        ["cube", "Slice"],
        ["cubePen", "Edit slice"],
        ["cubeSync", "Sync slice"],
        ["cubeHand", "Move slice"],
      ]}
    />
  </div>
);

const SelectBox: React.FC<{ label: string; options: string[]; className: string }> = ({ label, options, className }) => (
  <span className={clsx("relative flex h-[11px] items-center", className)}>
    <select
      aria-label={label}
      className="h-full w-full appearance-none rounded-[1px] border border-[#aaa] bg-gradient-to-b from-[#f4f4f4] to-[#dcdcdc] pl-0.5 leading-[9px]"
    >
      {options.map((o) => (
        <option key={o}>{o}</option>
      ))}
    </select>
    <Caret className="pointer-events-none absolute right-0.5" />
  </span>
);

const StyleToolbar = () => (
  <div className="flex h-[19px] shrink-0 items-center bg-white pb-0.5">
    <span className="ml-0.5 h-3 border-l border-dotted border-[#b5b5b5]" />
    <ToolButton icon="listPen" label="Attributes" className="h-4 w-[18px]" />
    <ToolButton icon="wireRed" label="Bounding box" />
    <MenuCaret label="Box color" className="h-4 w-1" />
    <ToolButton icon="lamp" label="Light color" />
    <MenuCaret label="Light options" className="h-4 w-[5px]" />
    <ToolButton icon="pie" label="Color map" />
    <ToolButton icon="arc" label="Curve nodes" pressed className="size-[15px]" />
    <MenuCaret label="Curve options" className="h-4 w-[5px]" />
    <SelectBox label="Node style" options={["point", "cube", "sphere"]} className="w-8" />
    <SelectBox label="Node size" options={["4", "6", "8"]} className="w-5" />
    <ToolButton icon="brush" label="Line color" className="ml-[3px] size-4" />
    <SelectBox label="Line width" options={["1", "2", "3"]} className="w-[18px]" />
    <ToolButton icon="lineStyle" label="Line style" />
    <MenuCaret label="Line options" className="h-4 w-1" />
    <span className="ml-[3px] h-3 border-l border-[#ddd]" />
    <ToolButton icon="pin" label="Pin" />
    <MenuCaret label="Pin options" className="h-4 w-1" />
  </div>
);

const StatusBar = () => (
  <footer className="flex h-4 shrink-0 items-center justify-end border-t border-[#d5d5d5] bg-[#f0f0f0] pr-[17px] pb-px">
    <div className="flex items-center border-r border-[#ddd] pr-[5px]">
      <button type="button" aria-label="Run" className="px-px">
        <Icon name="play" className="size-2" />
      </button>
      <MenuCaret label="Run options" className="h-3 w-1.5" />
      <button type="button" aria-label="Record" className="px-px">
        <Icon name="record" className="size-2" />
      </button>
      <MenuCaret label="Record options" className="h-3 w-1.5" />
      <button type="button" aria-label="Pause" className="px-0.5">
        <Icon name="pause" className="size-[7px]" />
      </button>
      <button type="button" aria-label="Stop" className="px-0.5">
        <Icon name="stop" className="size-2" />
      </button>
      <button type="button" aria-label="Edit script" className="px-px">
        <Icon name="edit" className="size-[9px]" />
      </button>
    </div>
    <span className="mx-[5px] size-2 rounded-full border border-[#35b035] bg-[#44df3a]" />
    <div role="progressbar" aria-label="Progress" className="h-[11px] w-[83px] rounded-[1px] border border-[#bbb] bg-gradient-to-b from-[#d5d5d5] to-[#c3c3c3]" />
  </footer>
);

const App: React.FC = () => (
  <div className="flex h-screen flex-col overflow-hidden bg-[linear-gradient(#8a8a8a,#a5a5a5_26%,#4c4c4c_27%,#3f3f3f)] pr-1 pb-[3px] pl-[5px] font-['Open_Sans','Noto_Sans',sans-serif] text-[6px] leading-[9px] text-[#2c2c34]">
    <div className="-mr-1 -ml-[5px] shrink-0 bg-[linear-gradient(90deg,#868686,#a2a2a2_8%,#8d8d8d_24%,#575757_29%,#777_38%,#777_58%,#999_72%,#858585)] pr-1 pl-[5px]">
      <TitleBar />
    </div>
    <MenuBar />
    <MainToolbar />
    <TabBar />
    <ViewerToolbar />
    <div className="flex min-h-0 flex-1 gap-0.5 bg-[#f4f4f4]">
      <SideDock />
      <div className="flex min-w-0 flex-1">
        <Viewer />
        <RightRail />
      </div>
    </div>
    <StyleToolbar />
    <StatusBar />
  </div>
);

export default App;
